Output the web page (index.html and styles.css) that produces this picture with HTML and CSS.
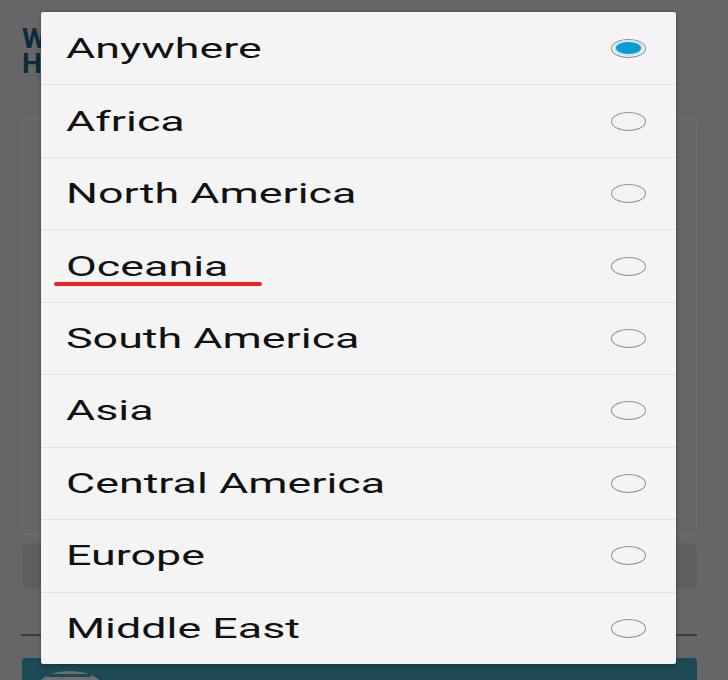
FILE: index.html
```html
<!DOCTYPE html>
<html>
<head>
  <title>Choose a region</title>
  <meta name="viewport" content="width=device-width, initial-scale=1.0">
  <link rel="stylesheet" href="styles.css">
</head>
<body>
  <div class="page">
    <h1 class="title">Where<br>How long</h1>
    <div class="card"></div>
    <div class="field"></div>
    <hr class="rule">
    <div class="action">
      <span class="action-icon"><span></span></span>
    </div>
  </div>

  <div class="dialog">
    <div class="item"><span class="label">Anywhere</span><span class="radio checked"></span></div>
    <div class="item"><span class="label">Africa</span><span class="radio"></span></div>
    <div class="item"><span class="label">North America</span><span class="radio"></span></div>
    <div class="item marked"><span class="label">Oceania</span><span class="radio"></span></div>
    <div class="item"><span class="label">South America</span><span class="radio"></span></div>
    <div class="item"><span class="label">Asia</span><span class="radio"></span></div>
    <div class="item"><span class="label">Central America</span><span class="radio"></span></div>
    <div class="item"><span class="label">Europe</span><span class="radio"></span></div>
    <div class="item"><span class="label">Middle East</span><span class="radio"></span></div>
  </div>
</body>
</html>
```

FILE: styles.css
```css
body {
  margin: 0;
  background-color: #666;
  font-family: Roboto, "Liberation Sans", sans-serif;
  height: 680px;
  overflow: hidden;
}

.page {
  padding: 0 31px 0 22px;
}

.title {
  margin: 0;
  padding-top: 26px;
  font-size: 28px;
  line-height: 25px;
  font-weight: bold;
  color: #0d2a3c;
}

.card {
  margin-top: 42px;
  height: 415px;
  border: 1px solid #717171;
  border-radius: 5px;
}

.field {
  margin-top: 8px;
  height: 46px;
  background-color: #5f5f5f;
  border-radius: 5px;
}

.rule {
  margin: 45px 0 0 -1px;
  border: 0;
  height: 2px;
  background-color: #3d3d3d;
}

.action {
  margin-top: 22px;
  height: 40px;
  background-color: #1c4954;
  border-radius: 4px;
  padding: 13px 0 0 13px;
  box-sizing: border-box;
}

.action-icon {
  display: block;
  width: 70px;
  height: 40px;
  border-radius: 50%;
  background-color: #6f6f6f;
  padding: 3px 0 0 12px;
  box-sizing: border-box;
}

.action-icon span {
  display: block;
  width: 44px;
  height: 3px;
  background-color: #1c4954;
}

.dialog {
  position: absolute;
  top: 12px;
  left: 41px;
  width: 635px;
  height: 652px;
  background-color: #f4f4f4;
  border-radius: 2px;
  box-shadow: 0 1px 4px rgba(0, 0, 0, 0.35);
  display: grid;
  grid-auto-rows: 1fr;
}

.item {
  position: relative;
  display: flex;
  align-items: center;
  justify-content: space-between;
  padding: 0 30px 0 25px;
  border-top: 1px solid #e3e3e3;
}

.item:first-child {
  border-top: 0;
}

.label {
  font-size: 28px;
  color: #111;
  transform: scaleX(1.6);
  transform-origin: left center;
}

.radio {
  width: 33px;
  height: 17px;
  border: 1.5px solid #929292;
  border-radius: 50%;
  box-sizing: content-box;
  display: flex;
  align-items: center;
  justify-content: center;
}

.radio.checked::before {
  content: "";
  width: 25px;
  height: 12px;
  border-radius: 50%;
  background-color: #0a9ad6;
  box-shadow: 0 0 0 2px #c4e5f4;
}

.marked::after {
  content: "";
  position: absolute;
  left: 13px;
  top: 52px;
  width: 208px;
  height: 4px;
  border-radius: 2px;
  background-color: #ee2222;
}
```
